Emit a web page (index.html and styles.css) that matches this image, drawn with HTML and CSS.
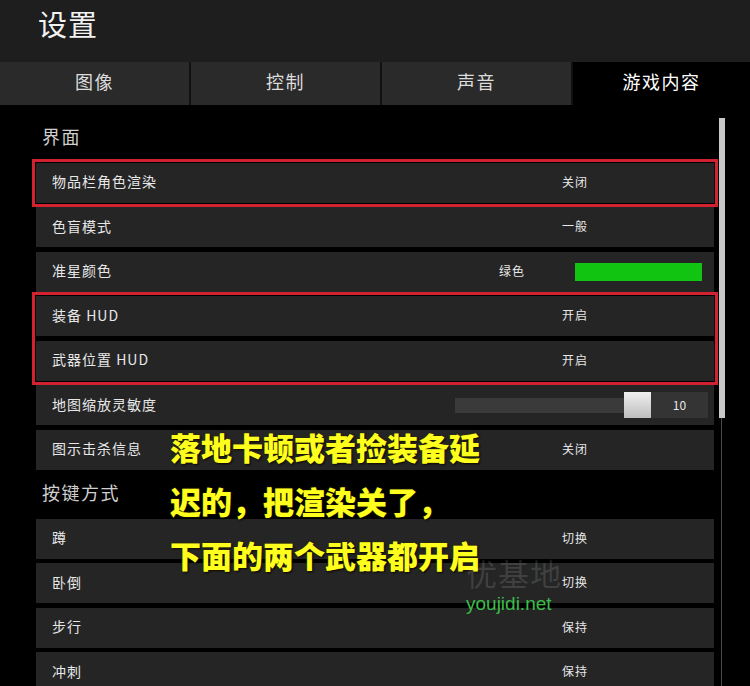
FILE: index.html
```html
<!DOCTYPE html>
<html>
    <head>
        <meta charset="utf-8">
        <link rel="stylesheet" href="styles.css">
    </head>
    <body>
        <div class="header">
            <div class="title">设置</div>
        </div>
        <div class="tabs">
            <div class="tab">图像</div>
            <div class="tab">控制</div>
            <div class="tab">声音</div>
            <div class="tab active">游戏内容</div>
        </div>
        <div class="content">
            <div class="list">
                <div class="section-title">界面</div>
                <div class="mark">
                    <div class="row"><span class="label">物品栏角色渲染</span><span class="val">关闭</span></div>
                </div>
                <div class="row"><span class="label">色盲模式</span><span class="val">一般</span></div>
                <div class="row">
                    <span class="label">准星颜色</span>
                    <span class="color-name">绿色</span>
                    <span class="swatch"></span>
                </div>
                <div class="mark">
                    <div class="row"><span class="label">装备 HUD</span><span class="val">开启</span></div>
                    <div class="row last"><span class="label">武器位置 HUD</span><span class="val">开启</span></div>
                </div>
                <div class="row slider-row">
                    <span class="label">地图缩放灵敏度</span>
                    <span class="track"></span>
                    <span class="thumb"></span>
                    <span class="num">10</span>
                </div>
                <div class="row"><span class="label">图示击杀信息</span><span class="val">关闭</span></div>
                <div class="section-title">按键方式</div>
                <div class="row"><span class="label">蹲</span><span class="val">切换</span></div>
                <div class="row"><span class="label">卧倒</span><span class="val">切换</span></div>
                <div class="row"><span class="label">步行</span><span class="val">保持</span></div>
                <div class="row"><span class="label">冲刺</span><span class="val">保持</span></div>
            </div>
            <div class="scrollbar"><div class="scroll-thumb"></div></div>

            <div class="note">
                落地卡顿或者捡装备延<br>
                迟的，把渲染关了，<br>
                下面的两个武器都开启
            </div>
            <div class="watermark">
                <div class="wm-cn">优基地</div>
                <div class="wm-en">youjidi.net</div>
            </div>
        </div>
    </body>
</html>
```

FILE: styles.css
```css
html, body {
    margin: 0;
    height: 686px;
    overflow: hidden;
    background: #000;
    font-family: "Noto Sans CJK SC", "Noto Sans", sans-serif;
    color: #e6e6e6;
}

.header {
    height: 62px;
    background: #1e1e1e;
    padding-left: 38px;
    box-sizing: border-box;
}

.title {
    font-size: 29px;
    line-height: 46px;
    letter-spacing: 1px;
    color: #f2f2f2;
}

.tabs {
    display: flex;
    height: 43px;
    background: #111;
}

.tab {
    flex: 0 0 189px;
    margin-right: 2px;
    background: #2a2a2a;
    color: #dcdcdc;
    font-size: 18px;
    letter-spacing: 1.5px;
    text-align: center;
    line-height: 38px;
}

.tab.active {
    flex: 1;
    margin-right: 0;
    background: #000;
    color: #fff;
}

.content {
    position: relative;
    display: flex;
    padding-top: 13px;
}

.list {
    width: 678px;
    margin-left: 36px;
}

.section-title {
    font-size: 18px;
    line-height: 24px;
    letter-spacing: 1.5px;
    color: #cfcfcf;
    padding: 6px 6px 14.5px;
}

.row {
    display: flex;
    align-items: center;
    height: 40px;
    margin-bottom: 4.5px;
    padding-left: 16px;
    background: #252525;
    font-size: 14px;
    letter-spacing: 1px;
    color: #e8e8e8;
}

.row .label, .row .val {
    margin-top: -3px;
}

.mark {
    outline: 3px solid #d3222f;
    outline-offset: 1px;
    margin-bottom: 4.5px;
}

.mark .row:last-child {
    margin-bottom: 0;
}

.label {
    flex: 1;
}

.val {
    width: 80px;
    margin-right: 99px;
    text-align: center;
    font-size: 12px;
}

.color-name {
    width: 60px;
    margin-right: 33px;
    margin-top: -3px;
    text-align: center;
    font-size: 12px;
}

.swatch {
    width: 127px;
    height: 18px;
    margin-right: 12px;
    background: #12c412;
}

.track {
    width: 169px;
    height: 15px;
    background: #3a3a3a;
}

.thumb {
    width: 27px;
    height: 26px;
    background: linear-gradient(to bottom, #f0f0f0, #bdbdbd);
}

.num {
    width: 57px;
    height: 26px;
    margin-right: 6px;
    background: #343434;
    font-size: 12px;
    line-height: 26px;
    text-align: center;
    letter-spacing: 0;
}

.scrollbar {
    width: 6px;
    margin-left: 5px;
    background: linear-gradient(to right, transparent 2px, #4a4a4a 2px, #4a4a4a 3px, transparent 3px);
}

.scroll-thumb {
    height: 300px;
    background: #c8c8c8;
}

.note {
    position: absolute;
    left: 170px;
    top: 315px;
    font-size: 31px;
    font-weight: 900;
    line-height: 54px;
    color: #ffff1e;
    text-shadow: 0 0 2px #3a3000, 1px 1px 2px #000;
}

.watermark {
    position: absolute;
    left: 466px;
    top: 448px;
}

.wm-cn {
    font-size: 31px;
    line-height: 40px;
    letter-spacing: 1px;
    color: rgba(255, 255, 255, 0.13);
}

.wm-en {
    font-family: "Liberation Sans", sans-serif;
    font-size: 19px;
    line-height: 22px;
    color: #3cbd4a;
}
```
